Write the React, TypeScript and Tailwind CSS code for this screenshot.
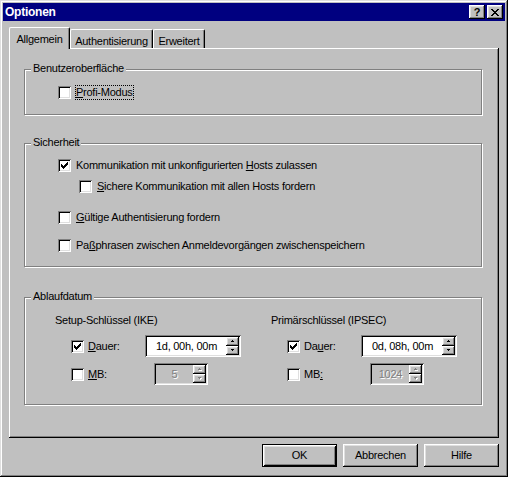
import React from "react";

const raised =
  "shadow-[inset_-1px_-1px_#000,inset_1px_1px_#fff,inset_-2px_-2px_#808080,inset_2px_2px_#dfdfdf]";
const sunken =
  "shadow-[inset_1px_1px_#808080,inset_-1px_-1px_#fff,inset_2px_2px_#000,inset_-2px_-2px_#dfdfdf]";

function Check({ checked }: { checked?: boolean }) {
  return (
    <div className={`relative w-[13px] h-[13px] shrink-0 bg-white ${sunken}`}>
      {checked && (
        <svg width="13" height="13" className="absolute left-0 top-0">
          {[2, 3, 4, 3, 2, 1, 0].map((o, i) => (
            <rect key={i} x={3 + i} y={3 + o} width="1" height="3" fill="#000" />
          ))}
        </svg>
      )}
    </div>
  );
}

function Arrow({ up, disabled }: { up?: boolean; disabled?: boolean }) {
  const c = disabled ? "#808080" : "#000";
  const rows = up
    ? [
        [1, 0, 1],
        [0, 1, 3],
      ]
    : [
        [0, 0, 3],
        [1, 1, 1],
      ];
  return (
    <svg width="4" height="3">
      {disabled &&
        rows.map(([x, y, w], i) => (
          <rect key={"s" + i} x={x + 1} y={y + 1} width={w} height="1" fill="#fff" />
        ))}
      {rows.map(([x, y, w], i) => (
        <rect key={i} x={x} y={y} width={w} height="1" fill={c} />
      ))}
    </svg>
  );
}

function Spin({ disabled }: { disabled?: boolean }) {
  return (
    <div className="flex flex-col w-[13px] h-full shrink-0">
      <div className={`flex-1 flex items-center justify-center bg-[#c0c0c0] ${raised}`}>
        <Arrow up disabled={disabled} />
      </div>
      <div className={`flex-1 flex items-center justify-center bg-[#c0c0c0] ${raised}`}>
        <Arrow disabled={disabled} />
      </div>
    </div>
  );
}

function Field({ value, disabled }: { value: string; disabled?: boolean }) {
  return (
    <div
      className={`h-[22px] flex p-[2px] ${sunken} ${
        disabled ? "bg-[#c0c0c0] w-[54px]" : "bg-white w-[96px]"
      }`}
    >
      <div
        className={`flex-1 text-center leading-[18px] ${
          disabled ? "text-[#808080] [text-shadow:1px_1px_0_#fff]" : "text-black"
        }`}
      >
        {value}
      </div>
      <Spin disabled={disabled} />
    </div>
  );
}

function Row({
  checked,
  children,
  className = "",
}: {
  checked?: boolean;
  children: React.ReactNode;
  className?: string;
}) {
  return (
    <div className={`flex items-center h-[13px] ${className}`}>
      <Check checked={checked} />
      <span className="ml-[5px] whitespace-nowrap">{children}</span>
    </div>
  );
}

function Group({
  label,
  className,
  children,
}: {
  label: string;
  className: string;
  children: React.ReactNode;
}) {
  return (
    <div
      className={`relative w-[458px] border border-[#808080] shadow-[inset_1px_1px_#fff,1px_1px_#fff] ${className}`}
    >
      <span className="absolute left-[6px] -top-[8px] px-[2px] bg-[#c0c0c0] leading-[13px] whitespace-nowrap">
        {label}
      </span>
      {children}
    </div>
  );
}

function KeyRow({
  checked,
  label,
  labelClass,
  value,
  disabled,
  className = "",
}: {
  checked?: boolean;
  label: React.ReactNode;
  labelClass: string;
  value: string;
  disabled?: boolean;
  className?: string;
}) {
  return (
    <div className={`flex items-center h-[22px] pl-[16px] ${className}`}>
      <Check checked={checked} />
      <span className={`ml-[4px] whitespace-nowrap ${labelClass}`}>{label}</span>
      <Field value={value} disabled={disabled} />
    </div>
  );
}

export default function App() {
  return (
    <div
      className={`w-[508px] h-[477px] bg-[#c0c0c0] p-[3px] flex flex-col font-['Liberation_Sans',Arial,sans-serif] text-[11px] leading-[13px] tracking-[-0.25px] text-black select-none shadow-[inset_-1px_-1px_#000,inset_1px_1px_#dfdfdf,inset_-2px_-2px_#808080,inset_2px_2px_#fff]`}
    >
      {/* Title bar */}
      <div className="h-[18px] bg-[#000080] flex items-center pl-[2px] pr-[2px]">
        <span className="flex-1 font-bold text-white text-[12px]">Optionen</span>
        <div
          className={`w-[16px] h-[14px] bg-[#c0c0c0] flex items-center justify-center font-bold text-[11px] leading-[11px] ${raised}`}
        >
          ?
        </div>
        <div className="w-[2px]" />
        <div className={`w-[16px] h-[14px] bg-[#c0c0c0] flex items-center justify-center ${raised}`}>
          <svg width="8" height="7">
            {[
              [0, 2, 6, 2],
              [1, 2, 5, 2],
              [2, 4, 0, 0],
              [3, 2, 0, 0],
              [2, 4, 0, 0],
              [1, 2, 5, 2],
              [0, 2, 6, 2],
            ].map(([a, aw, b, bw], i) => (
              <g key={i}>
                <rect x={a} y={i} width={aw} height="1" fill="#000" />
                {bw > 0 && <rect x={b} y={i} width={bw} height="1" fill="#000" />}
              </g>
            ))}
          </svg>
        </div>
      </div>

      {/* Tabs + panel */}
      <div className="ml-[6px] mt-[6px] w-[490px] flex flex-col">
        <div className="relative z-10 h-[22px] -mb-[1px] flex items-end">
          <div className="w-[61px] h-[22px] bg-[#c0c0c0] border-l border-t border-r border-l-white border-t-white border-r-black rounded-t-[2px] shadow-[inset_-1px_0_#808080] flex justify-center pt-[5px]">
            Allgemein
          </div>
          <div className="w-[83px] h-[19px] mb-[1px] bg-[#c0c0c0] border-l border-t border-r border-l-white border-t-white border-r-black rounded-t-[2px] shadow-[inset_-1px_0_#808080] flex justify-center pt-[5px]">
            Authentisierung
          </div>
          <div className="w-[52px] h-[19px] mb-[1px] bg-[#c0c0c0] border-l border-t border-r border-l-white border-t-white border-r-black rounded-t-[2px] shadow-[inset_-1px_0_#808080] flex justify-center pt-[5px]">
            Erweitert
          </div>
        </div>
        <div className="h-[390px] bg-[#c0c0c0] shadow-[inset_-1px_-1px_#000,inset_1px_1px_#fff,inset_-2px_-2px_#808080] pt-[21px] pl-[15px] flex flex-col">
          <Group label="Benutzeroberfläche" className="h-[46px] pt-[16px] pl-[33px]">
            <div className="flex items-center h-[13px]">
              <Check />
              <span className="ml-[4px] border border-dotted border-black leading-[13px] whitespace-nowrap">
                <span className="underline">P</span>rofi-Modus
              </span>
            </div>
          </Group>

          <Group label="Sicherheit" className="mt-[28px] h-[124px] pt-[15px] pl-[33px]">
            <Row checked>
              Kommunikation mit unkonfigurierten <span className="underline">H</span>osts zulassen
            </Row>
            <Row className="mt-[8px] ml-[21px]">
              <span className="underline">S</span>ichere Kommunikation mit allen Hosts fordern
            </Row>
            <Row className="mt-[18px]">
              <span className="underline">G</span>ültige Authentisierung fordern
            </Row>
            <Row className="mt-[15px]">
              Pa<span className="underline">ß</span>phrasen zwischen Anmeldevorgängen zwischenspeichern
            </Row>
          </Group>

          <Group label="Ablaufdatum" className="mt-[30px] h-[108px] pt-[16px] pl-[30px]">
            <div className="flex">
              <div className="w-[216px] flex flex-col">
                <div className="h-[13px] whitespace-nowrap">Setup-Schlüssel (IKE)</div>
                <KeyRow
                  className="mt-[8px]"
                  checked
                  label={
                    <>
                      <span className="underline">D</span>auer:
                    </>
                  }
                  labelClass="w-[57px]"
                  value="1d, 00h, 00m"
                />
                <KeyRow
                  className="mt-[6px]"
                  label={
                    <>
                      <span className="underline">M</span>B:
                    </>
                  }
                  labelClass="w-[66px]"
                  value="5"
                  disabled
                />
              </div>
              <div className="flex flex-col">
                <div className="h-[13px] whitespace-nowrap">Primärschlüssel (IPSEC)</div>
                <KeyRow
                  className="mt-[8px]"
                  checked
                  label={
                    <>
                      Da<span className="underline">u</span>er:
                    </>
                  }
                  labelClass="w-[57px]"
                  value="0d, 08h, 00m"
                />
                <KeyRow
                  className="mt-[6px]"
                  label={
                    <>
                      MB<span className="underline">:</span>
                    </>
                  }
                  labelClass="w-[66px]"
                  value="1024"
                  disabled
                />
              </div>
            </div>
          </Group>
        </div>
      </div>

      {/* Buttons */}
      <div className="flex justify-end gap-[6px] mt-[6px] pr-[6px]">
        <div className="w-[75px] h-[23px] bg-[#c0c0c0] flex items-center justify-center shadow-[inset_1px_1px_#000,inset_-1px_-1px_#000,inset_2px_2px_#fff,inset_-2px_-2px_#000,inset_3px_3px_#dfdfdf,inset_-3px_-3px_#808080]">
          OK
        </div>
        <div className={`w-[75px] h-[23px] bg-[#c0c0c0] flex items-center justify-center ${raised}`}>
          Abbrechen
        </div>
        <div className={`w-[75px] h-[23px] bg-[#c0c0c0] flex items-center justify-center ${raised}`}>
          Hilfe
        </div>
      </div>
    </div>
  );
}
